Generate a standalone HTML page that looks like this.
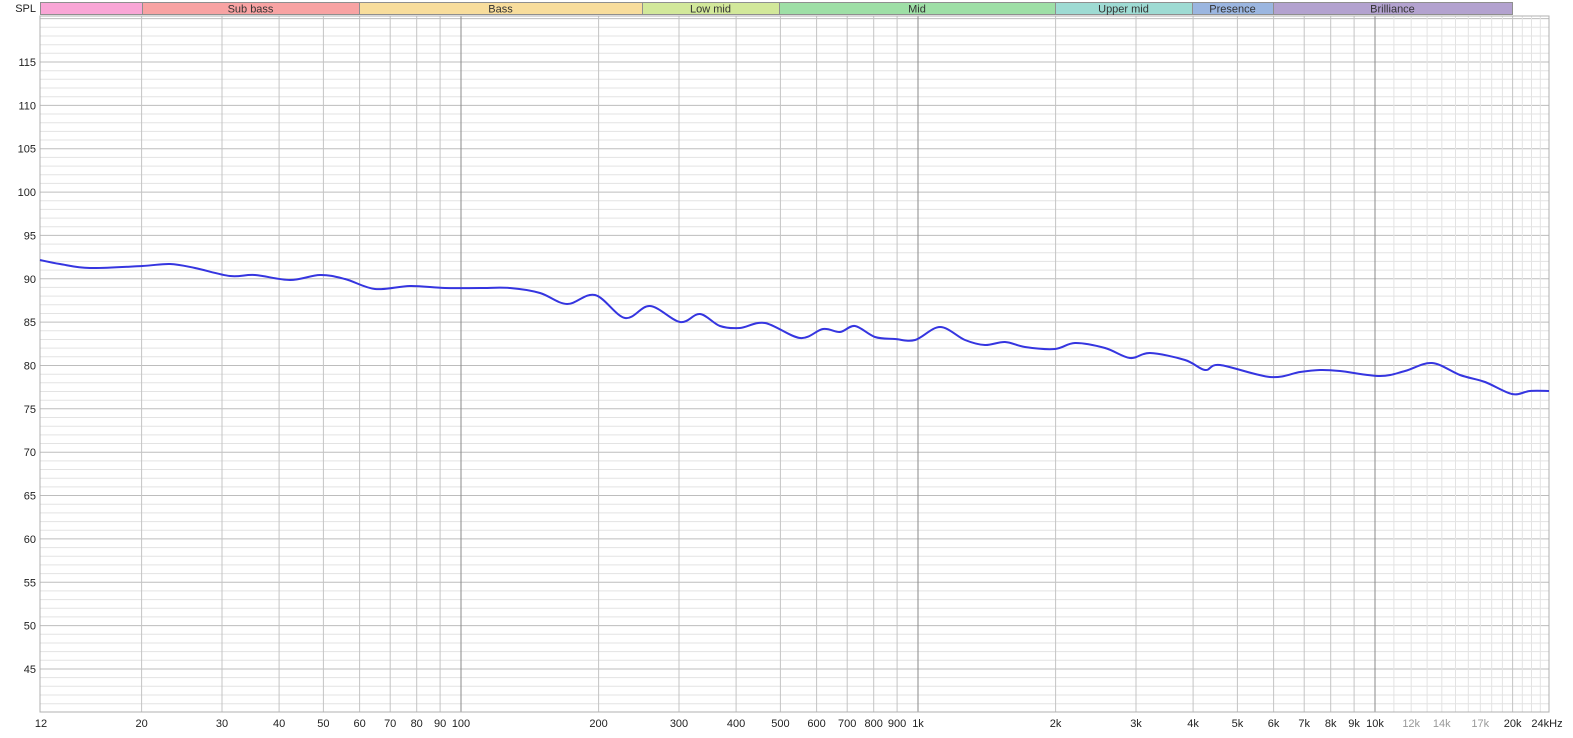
<!DOCTYPE html>
<html><head><meta charset="utf-8"><style>
html,body{margin:0;padding:0;background:#fff;width:1573px;height:738px;overflow:hidden}
svg{display:block;font-family:"Liberation Sans",sans-serif}
</style></head><body>
<svg id="s" width="1573" height="738" xmlns="http://www.w3.org/2000/svg"></svg>
<script>
const s=document.getElementById('s');
const L=40,R=1549,T=16,B=712;
const X=f=>918+457*Math.log10(f/1000);
const Y=d=>62+(115-d)*8.671;
let h='';
for(let d=41;d<=120;d++){const y=Y(d);if(y<T||y>B)continue;
 h+=`<line x1="${L}" x2="${R}" y1="${y.toFixed(1)}" y2="${y.toFixed(1)}" stroke="${d%5==0?'#bdbdbd':'#e3e3e3'}" stroke-width="1"/>`;}
const fr=[20,30,40,50,60,70,80,90,100,200,300,400,500,600,700,800,900,1000,2000,3000,4000,5000,6000,7000,8000,9000,10000,20000];
for(let f=11000;f<24000;f+=1000){if(f==20000)continue;const x=X(f);h+=`<line x1="${x.toFixed(1)}" x2="${x.toFixed(1)}" y1="${T}" y2="${B}" stroke="#e3e3e3"/>`;}
for(const f of fr){const x=X(f);const dark=(f==100||f==1000||f==10000);
 h+=`<line x1="${x.toFixed(1)}" x2="${x.toFixed(1)}" y1="${T}" y2="${B}" stroke="${dark?'#8a8a8a':'#c4c4c4'}"/>`;}
h+=`<rect x="${L}" y="${T}" width="${R-L}" height="${B-T}" fill="none" stroke="#b0b0b0"/>`;
const bands=[[40,142,'#f9a6d6',''],[142,359,'#f8a3a3','Sub bass'],[359,642,'#f8dd9c','Bass'],[642,779,'#d2e89a','Low mid'],[779,1055,'#9edfa6','Mid'],[1055,1192,'#9edbd3','Upper mid'],[1192,1273,'#9bb6e0','Presence'],[1273,1512,'#b3a2cf','Brilliance']];
for(const b of bands){h+=`<rect x="${b[0]+0.5}" y="2.5" width="${b[1]-b[0]}" height="12" fill="${b[2]}" stroke="#8f8f8f"/>`;
 if(b[3])h+=`<text x="${(b[0]+b[1])/2}" y="12.5" font-size="11" text-anchor="middle" fill="#333">${b[3]}</text>`;}
h+=`<text x="36" y="12" font-size="11" text-anchor="end" fill="#222">SPL</text>`;
for(let d=45;d<=115;d+=5)h+=`<text x="36" y="${(Y(d)+4).toFixed(1)}" font-size="11" text-anchor="end" fill="#222">${d}</text>`;
const lab=[[12,'12'],[20,'20'],[30,'30'],[40,'40'],[50,'50'],[60,'60'],[70,'70'],[80,'80'],[90,'90'],[100,'100'],[200,'200'],[300,'300'],[400,'400'],[500,'500'],[600,'600'],[700,'700'],[800,'800'],[900,'900'],[1000,'1k'],[2000,'2k'],[3000,'3k'],[4000,'4k'],[5000,'5k'],[6000,'6k'],[7000,'7k'],[8000,'8k'],[9000,'9k'],[10000,'10k'],[12000,'12k',1],[14000,'14k',1],[17000,'17k',1],[20000,'20k'],[24000,'24kHz']];
for(const l of lab){let x=X(l[0]);if(l[0]==24000)x=1547;if(l[0]==12)x=41;
 h+=`<text x="${x.toFixed(1)}" y="727" font-size="11" text-anchor="middle" fill="${l[2]?'#999':'#222'}">${l[1]}</text>`;}
const p=[[40,260],[60,264],[90,268],[142,266],[170,264],[195,268],[230,276],[255,275],[290,280],[320,275],[345,279],[375,289],[410,286],[445,288],[480,288],[510,288],[540,293],[567,304],[595,295],[625,318],[650,306],[680,322],[700,314],[720,326],[740,328],[765,323],[800,338],[823,329],[840,332],[855,326],[875,337],[895,339],[915,340],[940,327],[965,340],[985,345],[1005,342],[1025,347],[1055,349],[1075,343],[1105,348],[1130,358],[1150,353],[1185,360],[1205,370],[1220,365],[1270,377],[1300,372],[1320,370],[1340,371],[1380,376],[1405,371],[1432,363],[1460,375],[1485,382],[1512,394],[1530,391],[1549,391]];
let d=`M${p[0][0]},${p[0][1]}`;
for(let i=0;i<p.length-1;i++){const p0=p[Math.max(0,i-1)],p1=p[i],p2=p[i+1],p3=p[Math.min(p.length-1,i+2)];
 const c1=[p1[0]+(p2[0]-p0[0])/6,p1[1]+(p2[1]-p0[1])/6],c2=[p2[0]-(p3[0]-p1[0])/6,p2[1]-(p3[1]-p1[1])/6];
 d+=` C${c1[0].toFixed(1)},${c1[1].toFixed(1)} ${c2[0].toFixed(1)},${c2[1].toFixed(1)} ${p2[0]},${p2[1]}`;}
h+=`<path d="${d}" fill="none" stroke="#3535e0" stroke-width="2"/>`;
s.innerHTML=h;
</script>
</body></html>
